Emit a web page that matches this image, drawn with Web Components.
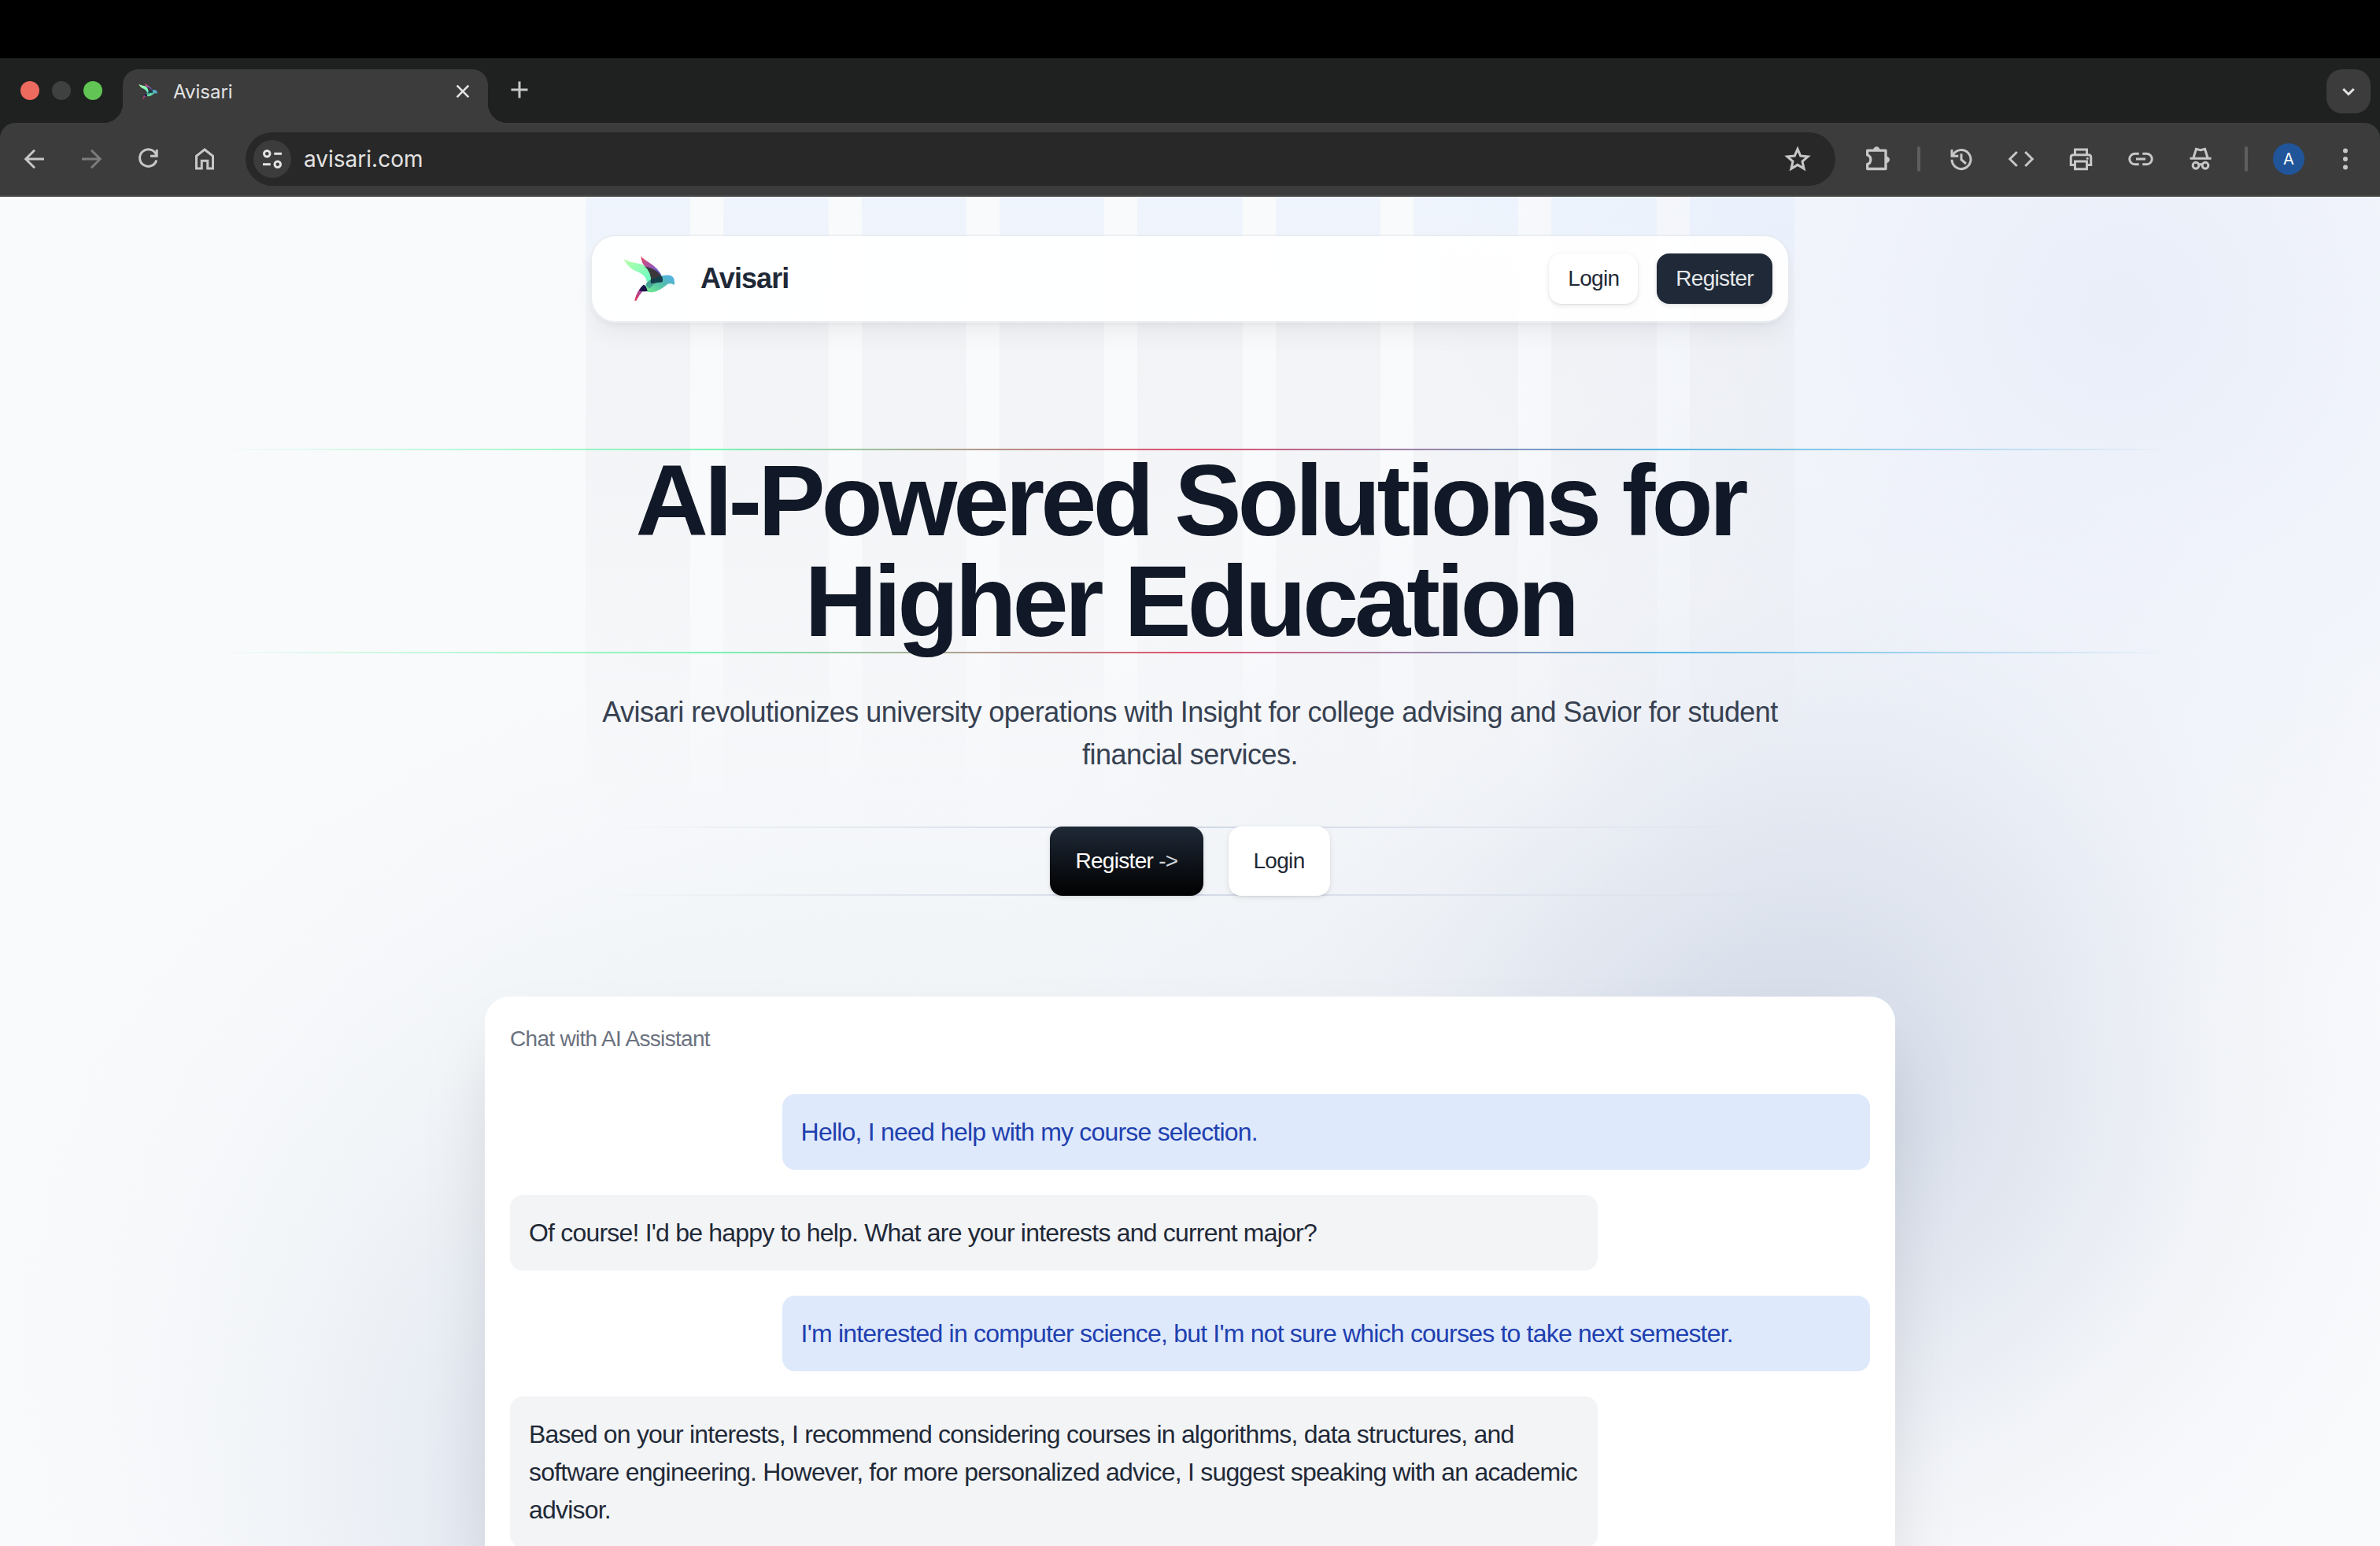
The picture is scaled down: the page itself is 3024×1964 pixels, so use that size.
<!DOCTYPE html>
<html lang="en">
<head>
<meta charset="utf-8">
<title>Avisari</title>
<style>
  body { margin: 0; background: #000; font-family: "Liberation Sans", Arial, sans-serif; }
</style>
</head>
<body>
<browser-window>
  <tab-strip slot="chrome"></tab-strip>
  <tool-bar slot="chrome"></tool-bar>
  <landing-page>
    <site-header></site-header>
    <hero-section></hero-section>
    <chat-card heading="Chat with AI Assistant">
      <chat-message from="user">Hello, I need help with my course selection.</chat-message>
      <chat-message>Of course! I'd be happy to help. What are your interests and current major?</chat-message>
      <chat-message from="user">I'm interested in computer science, but I'm not sure which courses to take next semester.</chat-message>
      <chat-message>Based on your interests, I recommend considering courses in algorithms, data structures, and software engineering. However, for more personalized advice, I suggest speaking with an academic advisor.</chat-message>
    </chat-card>
  </landing-page>
</browser-window>

<script>
const define = (name, html, setup) => customElements.define(name, class extends HTMLElement {
  constructor() {
    super();
    const t = document.createElement('template');
    t.innerHTML = '<style>:host,*,*::before,*::after{box-sizing:border-box}</style>' + html;
    this.attachShadow({ mode: 'open' }).append(t.content.cloneNode(true));
  }
  connectedCallback() { if (setup) setup(this); }
});

const ICONS = {
  back: '<path d="M20 12H5M12 4.5 4.5 12l7.5 7.5"/>',
  forward: '<path d="M4 12h15M12 4.500l7.500 7.500-7.500 7.500"/>',
  reload: '<path d="M19 8.500A7.200 7.200 0 1 0 19.200 13M19.500 4v5.500H14"/>',
  home: '<path d="M5 20V9.500L12 4l7 5.500V20h-4.500v-6.500h-5V20z"/>',
  tune: '<circle cx="7.500" cy="7.500" r="2.500"/><path d="M13.500 7.500H20M4 16.500h6.500"/><circle cx="16.500" cy="16.500" r="2.500"/>',
  star: '<path d="m12 3.600 2.500 5.800 6.200.5-4.700 4.100 1.400 6.200L12 16.900l-5.400 3.300L8 14 3.300 9.900l6.200-.5z" stroke-linejoin="miter"/>',
  puzzle: '<path d="M4 5.500h14v14H4v-3.500q2.500-.700 2.500-3.500T4 9z" stroke-linejoin="round"/><path d="M8.500 5a2.500 2.500 0 0 1 5 0zM18.500 10a2.500 2.500 0 0 1 0 5z" fill="currentColor" stroke="none"/>',
  history: '<path d="M5 8.500A8 8 0 1 1 4 12.500M4 4v5.500h5.500M12 7.500V12.500l4 3.500"/>',
  code: '<path d="M8.500 6 2.500 12l6 6M15.500 6l6 6-6 6"/>',
  print: '<path d="M7 8V4h10v4M7 17H3.500v-6.500Q3.500 8.500 5.500 8.500h13q2 0 2 2V17H17M7 14h10v6.500H7z"/><circle cx="17.500" cy="11.500" r="1" fill="currentColor" stroke="none"/>',
  link: '<path d="M10.500 7.500H7a4.500 4.500 0 0 0 0 9h3.500M13.500 7.500H17a4.500 4.500 0 0 1 0 9h-3.500M8 12h8"/>',
  incognito: '<path d="M3 11.500h18"/><path d="M6 11 8.300 3.500l3.700 1 3.700-1L18 11" /><circle cx="8" cy="17.500" r="2.600"/><circle cx="16" cy="17.500" r="2.600"/><path d="M10.500 16.500h3"/>',
  more: '<g fill="currentColor" stroke="none"><circle cx="12" cy="5" r="2"/><circle cx="12" cy="12" r="2"/><circle cx="12" cy="19" r="2"/></g>',
  close: '<path d="m6.500 6.500 11 11M17.500 6.500l-11 11"/>',
  plus: '<path d="M12 5v14M5 12h14"/>',
  chevron: '<path d="m7.500 10 4.500 4.500 4.500-4.500"/>'
};
define('icon-glyph', `
  <style>
    :host { display: inline-flex; width: 36px; height: 36px; }
    svg { width: 100%; height: 100%; fill: none; stroke: currentColor; stroke-width: 2; }
  </style>
  <svg viewBox="0 0 24 24" aria-hidden="true"></svg>`,
  el => { el.shadowRoot.querySelector('svg').innerHTML = ICONS[el.getAttribute('name')]; });

define('bird-logo', `
  <style>:host { display: block; width: 66px; height: 60px; } svg { display: block; width: 100%; height: 100%; }</style>
  <svg viewBox="189 260 198 180" role="img" aria-label="Avisari bird">
    <defs>
      <linearGradient id="wing" x1="0" y1="0" x2="1" y2="1"><stop offset="0" stop-color="#b9ffa8"/><stop offset="1" stop-color="#68fcc4"/></linearGradient>
      <linearGradient id="rear" x1="0" y1="0" x2="1" y2="1"><stop offset="0" stop-color="#e84a62"/><stop offset=".5" stop-color="#9a55b4"/><stop offset="1" stop-color="#4466f5"/></linearGradient>
      <linearGradient id="body" x1="0" y1="1" x2="1" y2="0"><stop offset="0" stop-color="#72f08c"/><stop offset=".55" stop-color="#52bcae"/><stop offset="1" stop-color="#55aef2"/></linearGradient>
      <linearGradient id="tail" x1="0" y1="1" x2="1" y2="0"><stop offset="0" stop-color="#e3304e"/><stop offset=".6" stop-color="#a04fb0"/><stop offset="1" stop-color="#4a58d8"/></linearGradient>
    </defs>
    <path fill="url(#wing)" d="M191 274Q208 285 235 290Q268 296 274 305Q296 325 296 356L279 362Q274 338 250 327Q206 312 191 274Z"/>
    <path fill="url(#rear)" d="M256 264Q264 275 286 288Q326 312 338 346L312 325Q292 310 271 303Q257 288 256 264Z"/>
    <path fill="url(#body)" d="M273 376Q278 356 316 344Q340 334 366 337Q383 342 383 358L385 366L382 374Q374 366 358 370Q332 394 304 401Q286 404 275 397Q272 386 273 376Z"/>
    <path fill="#47a494" d="M275 372Q282 354 318 343L337 340Q341 352 338 363Q315 366 309 369L290 387Q278 382 275 372Z"/>
    <path fill="#3a383a" d="M270 303Q310 312 327 331Q341 347 338 362Q316 364 295 369Q297 325 270 303Z"/>
    <path fill="#143e4c" d="M293 353Q312 344 336 341Q340 352 338 362Q316 364 294 369Z"/>
    <path fill="url(#tail)" d="M266 373Q276 376 281 397L262 399Q250 412 238 434L232 434Q240 394 266 373Z"/>
    <path fill="#1b1546" d="M266 373Q275 374 281 397Q264 401 249 396Q255 382 266 373Z"/>
  </svg>`);

define('browser-window', `
  <style>
    :host { display: flex; flex-direction: column; height: 100vh; padding-top: 74px; background: #000; overflow: hidden; }
    .chrome { background: #1f2120; font-family: Inter, Roboto, sans-serif; color: #c7c7c7; border-bottom: 2px solid #4a4a4a; }
    main { flex: 1; min-height: 0; overflow: hidden; }
  </style>
  <div class="chrome"><slot name="chrome"></slot></div>
  <main><slot></slot></main>`);

define('tab-strip', `
  <style>
    :host { display: flex; align-items: flex-end; height: 82px; padding: 0 12px 0 26px; color: #e3e3e3; }
    .lights { display: flex; gap: 16px; height: 68px; padding: 15px 0; }
    .lights i { width: 24px; height: 24px; border-radius: 50%; background: #ed6a5e; }
    .lights i:nth-child(2) { background: #3f4040; }
    .lights i:nth-child(3) { background: #61c454; }
    .tab { position: relative; display: flex; align-items: center; gap: 20px; width: 464px; height: 68px; margin-left: 26px; padding: 0 16px 12px 20px; background: #3c3c3c; border-radius: 20px 20px 0 0; font-size: 24px; }
    .tab::before, .tab::after { content: ""; position: absolute; bottom: 0; width: 24px; height: 24px; }
    .tab::before { right: 100%; background: radial-gradient(circle at 0 0, transparent 24px, #3c3c3c 24px); }
    .tab::after { left: 100%; background: radial-gradient(circle at 100% 0, transparent 24px, #3c3c3c 24px); }
    .tab span { flex: 1; }
    bird-logo { width: 24px; height: 22px; }
    button { display: flex; align-items: center; justify-content: center; border: 0; padding: 0; background: none; color: inherit; }
    .tab button, .tab icon-glyph { width: 32px; height: 32px; }
    .new { width: 48px; height: 68px; margin: 0 auto 0 16px; padding-bottom: 16px; color: #c7c7c7; }
    .list { width: 56px; height: 56px; margin-bottom: 12px; border-radius: 20px; background: #3c3c3c; }
    .new icon-glyph { width: 36px; height: 36px; }
  </style>
  <div class="lights"><i></i><i></i><i></i></div>
  <div class="tab"><bird-logo></bird-logo><span>Avisari</span><button aria-label="Close tab"><icon-glyph name="close"></icon-glyph></button></div>
  <button class="new" aria-label="New tab"><icon-glyph name="plus"></icon-glyph></button>
  <button class="list" aria-label="Search tabs"><icon-glyph name="chevron"></icon-glyph></button>`);

define('tool-bar', `
  <style>
    :host { display: flex; align-items: center; padding: 12px 8px; background: #3c3c3c; border-radius: 20px 20px 0 0; }
    button { display: flex; align-items: center; justify-content: center; width: 76px; height: 48px; padding: 0; border: 0; background: none; color: inherit; font: inherit; }
    .nav { width: 72px; }
    .off { color: #7c7c7c; }
    .box { flex: 1; display: flex; align-items: center; height: 68px; margin: 0 16px; padding: 0 10px; border-radius: 34px; background: #282828; color: #e3e3e3; }
    .box .site { width: 48px; border-radius: 50%; background: #3c3c3c; }
    .box .mark { color: #c7c7c7; }
    input { flex: 1; min-width: 0; margin-left: 16px; padding: 0; border: 0; outline: 0; background: none; color: inherit; font: inherit; font-size: 28px; line-height: 40px; }
    hr { width: 4px; height: 32px; margin: 0 14px 0 12px; border: 0; border-radius: 2px; background: #5e5e5e; }
    hr.last { margin: 0 32px 0 18px; }
    .me { width: 40px; height: 40px; margin-right: 16px; border-radius: 50%; background: #20559a; color: #fff; font-size: 20px; }
    .ext { width: 40px; height: 40px; }
  </style>
  <button class="nav" aria-label="Back"><icon-glyph name="back"></icon-glyph></button>
  <button class="nav off" aria-label="Forward"><icon-glyph name="forward"></icon-glyph></button>
  <button class="nav" aria-label="Reload"><icon-glyph name="reload"></icon-glyph></button>
  <button class="nav" aria-label="Home"><icon-glyph name="home"></icon-glyph></button>
  <div class="box">
    <button class="site" aria-label="Site information"><icon-glyph name="tune"></icon-glyph></button>
    <input type="text" aria-label="Address" value="avisari.com">
    <button class="mark" aria-label="Bookmark"><icon-glyph name="star"></icon-glyph></button>
  </div>
  <button aria-label="Extensions"><icon-glyph class="ext" name="puzzle"></icon-glyph></button>
  <hr>
  <button aria-label="History"><icon-glyph name="history"></icon-glyph></button>
  <button aria-label="Developer tools"><icon-glyph name="code"></icon-glyph></button>
  <button aria-label="Print"><icon-glyph name="print"></icon-glyph></button>
  <button aria-label="Copy link"><icon-glyph name="link"></icon-glyph></button>
  <button aria-label="Incognito"><icon-glyph name="incognito"></icon-glyph></button>
  <hr class="last">
  <button class="me" aria-label="Profile">A</button>
  <button class="nav" aria-label="Menu"><icon-glyph name="more"></icon-glyph></button>`);

define('landing-page', `
  <style>
    :host {
      display: block; position: relative; min-height: 100%; padding: 48px 32px 64px; color: #1f2937;
      background:
        radial-gradient(ellipse 22% 36% at 76% 62%, rgba(160,176,205,.36), rgba(172,186,212,.2) 45%, rgba(200,210,228,.07) 78%, transparent),
        radial-gradient(ellipse 32% 48% at 73% 62%, rgba(195,204,222,.24), rgba(204,212,228,.12) 60%, transparent),
        radial-gradient(ellipse 21% 42% at 26% 92%, rgba(172,184,218,.3), rgba(190,202,226,.15) 48%, rgba(220,228,240,.06) 80%, transparent),
        radial-gradient(ellipse 30% 50% at 89% 8%, rgba(230,235,248,.8), rgba(234,239,250,.5) 50%, transparent),
        radial-gradient(ellipse 40% 52% at 38% 80%, rgba(220,230,236,.5), transparent),
        #f9fafc;
    }
    .bars {
      position: absolute; top: 0; left: 0; right: 0; height: 800px; max-width: 1536px; margin: 0 auto;
      display: grid; grid-template-columns: repeat(9, 1fr); column-gap: 42px;
    }
    .bars i { background: linear-gradient(rgba(219,234,254,.34) 0, rgba(219,232,252,.32) 50px, rgba(229,231,235,.34) 170px, rgba(229,231,235,.3) 320px, rgba(229,231,235,.18) 560px, transparent); }
    .content { position: relative; display: flex; flex-direction: column; align-items: center; }
  </style>
  <div class="bars" aria-hidden="true"><i></i><i></i><i></i><i></i><i></i><i></i><i></i><i></i><i></i></div>
  <div class="content"><slot></slot></div>`);

define('action-link', `
  <style>
    :host { display: block; }
    a { display: block; padding: 12px 24px; border-radius: 16px; background: #fff; color: #1f2937; font-size: 28px; line-height: 40px; letter-spacing: -0.025em; text-decoration: none; box-shadow: 0 2px 6px rgba(0,0,0,.1), 0 1px 2px rgba(0,0,0,.06); }
    :host([tone=dark]) a { background: #1f2937; color: #e5e7eb; }
    :host([size=large]) a { padding: 24px 32px; }
    :host([tone=ink]) a { background: linear-gradient(#1f2937, #000); color: #fff; }
  </style>
  <a href="#"><slot></slot></a>`);

define('site-header', `
  <style>
    :host { display: flex; align-items: center; width: 100%; max-width: 1524px; padding: 22px 20px; gap: 24px; border: 2px solid rgba(229,231,235,.6); border-radius: 32px; background: rgba(255,255,255,.92); background-clip: padding-box; box-shadow: 0 20px 30px -6px rgba(0,0,0,.05), 0 4px 8px -2px rgba(0,0,0,.05); }
    .brand { display: flex; align-items: center; gap: 32px; margin: 0 auto 0 20px; font-size: 36px; line-height: 56px; font-weight: 700; letter-spacing: -0.025em; color: #1f2937; text-decoration: none; }
  </style>
  <a class="brand" href="#"><bird-logo></bird-logo><span>Avisari</span></a>
  <action-link>Login</action-link>
  <action-link tone="dark">Register</action-link>`);

define('hero-section', `
  <style>
    :host { display: flex; flex-direction: column; align-items: center; width: 100%; margin: 160px 0 128px; text-align: center; }
    .rule { height: 2px; width: 84%; background: linear-gradient(90deg, transparent, #7cf5b2 26%, #df5170, #56b6e2 74%, transparent); }
    h1 { position: relative; margin: 0; max-width: 1536px; color: #111827; font-size: 128px; line-height: 128px; font-weight: 700; letter-spacing: -5px; }
    p { margin: 48px 0 64px; max-width: 1536px; color: #374151; font-size: 36px; line-height: 54px; letter-spacing: -0.015em; }
    .thin { height: 2px; width: 1512px; max-width: 100%; background: linear-gradient(90deg, transparent, #d1d9e6, transparent); }
    .actions { display: flex; gap: 32px; margin: -2px 0; position: relative; }
    .arrow { color: #d1d5db; }
  </style>
  <div class="rule"></div>
  <h1>AI-Powered Solutions for Higher Education</h1>
  <div class="rule"></div>
  <p>Avisari revolutionizes university operations with Insight for college advising and Savior for student financial services.</p>
  <div class="thin"></div>
  <div class="actions">
    <action-link size="large" tone="ink">Register <span class="arrow">-&gt;</span></action-link>
    <action-link size="large">Login</action-link>
  </div>
  <div class="thin"></div>`);

define('chat-card', `
  <style>
    :host { display: block; width: 100%; max-width: 1792px; padding: 32px; border-radius: 32px; background: #fff; box-shadow: 0 50px 100px -24px rgba(0,0,0,.17); }
    h2 { margin: 0 0 48px; color: #6b7280; font-size: 28px; line-height: 44px; font-weight: 400; letter-spacing: -0.025em; }
    .log { display: flex; flex-direction: column; gap: 32px; }
  </style>
  <h2></h2>
  <div class="log"><slot></slot></div>`,
  el => { el.shadowRoot.querySelector('h2').textContent = el.getAttribute('heading'); });

define('chat-message', `
  <style>
    :host { display: block; width: 80%; padding: 24px; border-radius: 16px; background: #f3f4f6; color: #1f2937; font-size: 32px; line-height: 48px; letter-spacing: -0.025em; }
    :host([from=user]) { align-self: flex-end; background: #dee9fc; color: #1e40af; }
  </style>
  <slot></slot>`);
</script>
</body>
</html>
